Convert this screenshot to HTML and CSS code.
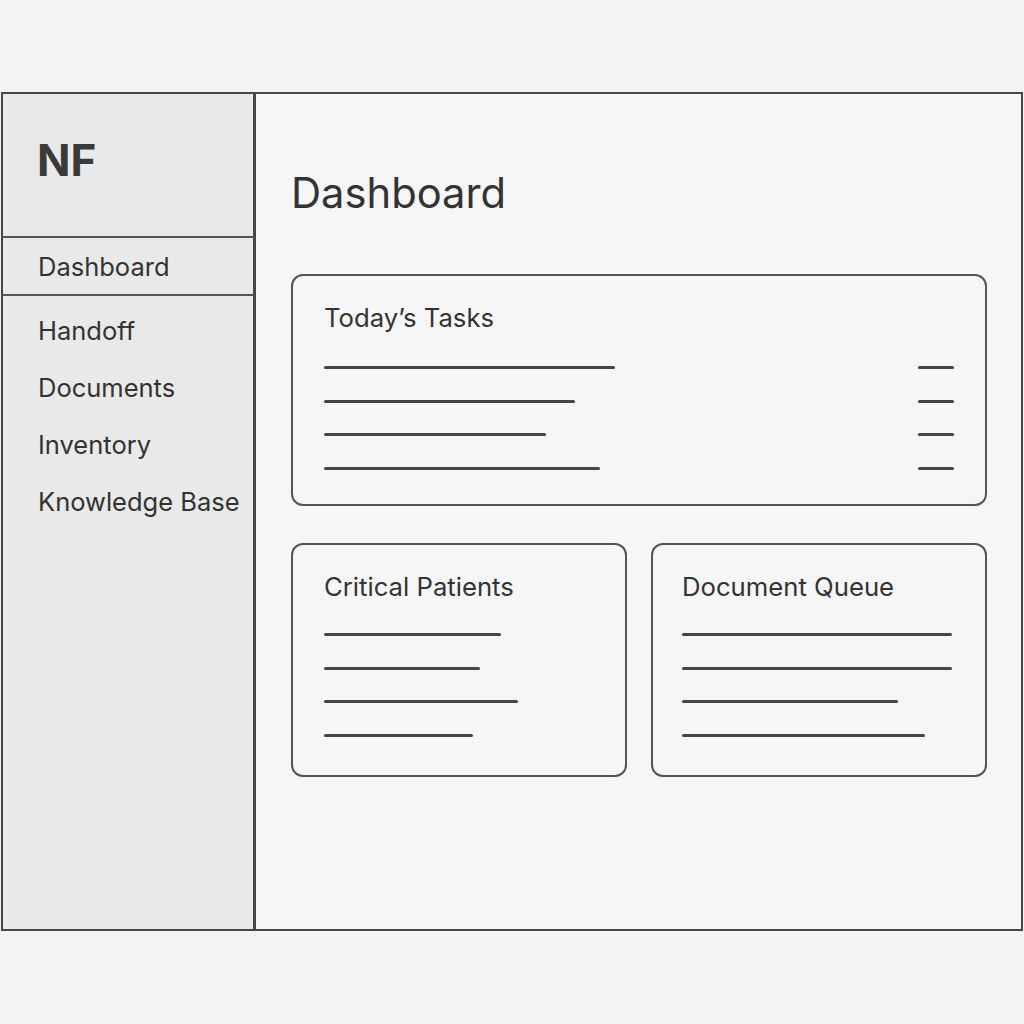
FILE: index.html
```html
<!DOCTYPE html>
<html>
<head>
<meta charset="utf-8">
<link rel="stylesheet" href="styles.css">
</head>
<body>
<div class="frame">
  <aside class="sidebar">
    <div class="brand">NF</div>
    <div class="nav-active">Dashboard</div>
    <nav class="nav">
      <div class="nav-item">Handoff</div>
      <div class="nav-item">Documents</div>
      <div class="nav-item">Inventory</div>
      <div class="nav-item">Knowledge Base</div>
    </nav>
  </aside>
  <main class="main">
    <h1 class="title">Dashboard</h1>
    <section class="card card-wide">
      <h2 class="card-title">Today’s Tasks</h2>
      <div class="rows">
        <div class="row"><span class="line" style="width:291px"></span><span class="tick"></span></div>
        <div class="row"><span class="line" style="width:251px"></span><span class="tick"></span></div>
        <div class="row"><span class="line" style="width:222px"></span><span class="tick"></span></div>
        <div class="row"><span class="line" style="width:276px"></span><span class="tick"></span></div>
      </div>
    </section>
    <div class="pair">
      <section class="card card-half">
        <h2 class="card-title">Critical Patients</h2>
        <div class="rows">
          <div class="row"><span class="line" style="width:177px"></span></div>
          <div class="row"><span class="line" style="width:156px"></span></div>
          <div class="row"><span class="line" style="width:194px"></span></div>
          <div class="row"><span class="line" style="width:149px"></span></div>
        </div>
      </section>
      <section class="card card-half card-right">
        <h2 class="card-title">Document Queue</h2>
        <div class="rows">
          <div class="row"><span class="line" style="width:270px"></span></div>
          <div class="row"><span class="line" style="width:270px"></span></div>
          <div class="row"><span class="line" style="width:216px"></span></div>
          <div class="row"><span class="line" style="width:243px"></span></div>
        </div>
      </section>
    </div>
  </main>
</div>
</body>
</html>
```

FILE: styles.css
```css
html, body {
  margin: 0;
  padding: 0;
  background: #f3f3f3;
  font-family: Inter, "Noto Sans", "Liberation Sans", sans-serif;
  color: #333;
}

.frame {
  margin: 92px 0 0 1px;
  width: 1022px;
  height: 839px;
  box-sizing: border-box;
  border: 2px solid #474747;
  display: flex;
}

.sidebar {
  width: 253px;
  flex: none;
  box-sizing: border-box;
  border-right: 3px solid #474747;
  background: #e9e9e9;
  display: flex;
  flex-direction: column;
}

.brand {
  height: 144px;
  box-sizing: border-box;
  border-bottom: 2px solid #555;
  padding: 40px 0 0 34px;
  font-size: 44px;
  font-weight: 700;
  line-height: 52px;
  color: #3a3a3a;
}

.nav-active {
  height: 58px;
  box-sizing: border-box;
  border-bottom: 2px solid #555;
  padding-left: 35px;
  font-size: 25.5px;
  line-height: 57px;
}

.nav {
  display: flex;
  flex-direction: column;
  padding-top: 6px;
}

.nav-item {
  padding-left: 35px;
  font-size: 25.5px;
  line-height: 57px;
  height: 57px;
}

.main {
  flex: 1;
  background: #f6f6f6;
  padding: 0 34px 0 35px;
  display: flex;
  flex-direction: column;
}

.title {
  margin: 74px 0 0 0;
  font-size: 41.7px;
  font-weight: 400;
  line-height: 50px;
  color: #333;
}

.card {
  box-sizing: border-box;
  border: 2px solid #555;
  border-radius: 12px;
  background: #f6f6f6;
}

.card-wide {
  margin-top: 56px;
  height: 232px;
  padding: 26px 31px 0 31px;
}

.card-title {
  margin: 0;
  font-size: 25.7px;
  font-weight: 400;
  line-height: 32px;
  color: #333;
}

.rows {
  margin-top: 32px;
  display: flex;
  flex-direction: column;
  gap: 30.5px;
}

.card-half .rows {
  margin-top: 30px;
}

.row {
  display: flex;
  justify-content: space-between;
  align-items: center;
  height: 3px;
}

.line {
  display: block;
  height: 3px;
  border-radius: 2px;
  background: #454545;
}

.tick {
  display: block;
  width: 36px;
  height: 3px;
  border-radius: 2px;
  background: #454545;
}

.pair {
  margin-top: 37px;
  display: flex;
  gap: 24px;
}

.card-half {
  width: 336px;
  height: 234px;
  padding: 26px 31px 0 31px;
}

.card-right {
  padding-left: 29px;
}
```
